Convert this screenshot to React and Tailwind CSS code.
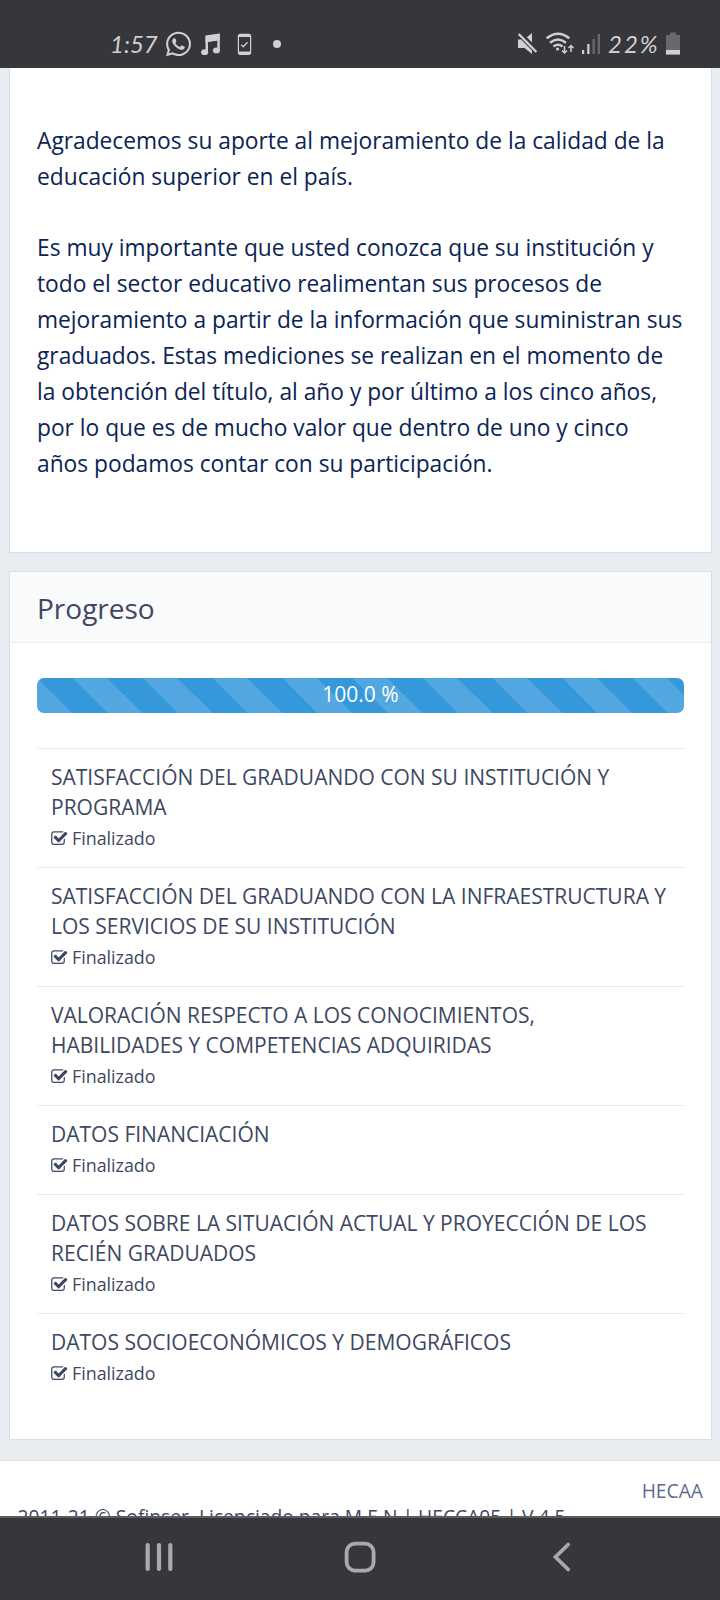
import React from "react";
import { FaWhatsapp } from "react-icons/fa";

const sections = [
  ["SATISFACCIÓN DEL GRADUANDO CON SU INSTITUCIÓN Y", "PROGRAMA"],
  ["SATISFACCIÓN DEL GRADUANDO CON LA INFRAESTRUCTURA Y", "LOS SERVICIOS DE SU INSTITUCIÓN"],
  ["VALORACIÓN RESPECTO A LOS CONOCIMIENTOS,", "HABILIDADES Y COMPETENCIAS ADQUIRIDAS"],
  ["DATOS FINANCIACIÓN"],
  ["DATOS SOBRE LA SITUACIÓN ACTUAL Y PROYECCIÓN DE LOS", "RECIÉN GRADUADOS"],
  ["DATOS SOCIOECONÓMICOS Y DEMOGRÁFICOS"],
];

const intro = [
  ["Agradecemos su aporte al mejoramiento de la calidad de la", "educación superior en el país."],
  [
    "Es muy importante que usted conozca que su institución y",
    "todo el sector educativo realimentan sus procesos de",
    "mejoramiento a partir de la información que suministran sus",
    "graduados. Estas mediciones se realizan en el momento de",
    "la obtención del título, al año y por último a los cinco años,",
    "por lo que es de mucho valor que dentro de uno y cinco",
    "años podamos contar con su participación.",
  ],
];

function Lines({ lines }) {
  return lines.map((line) => (
    <span key={line} className="block whitespace-nowrap">
      {line}
    </span>
  ));
}

function CheckSquare() {
  return (
    <svg className="mt-px h-[17.5px] w-[16.5px] shrink-0" viewBox="0 0 1664 1792" fill="currentColor">
      <path d="M1408 930v318q0 119-84.500 203.500t-203.500 84.500h-832q-119 0-203.500-84.500t-84.500-203.500v-832q0-119 84.500-203.500t203.500-84.500h832q63 0 117 25 15 7 18 23 3 17-9 29l-49 49q-10 10-23 10-3 0-9-2-23-6-45-6h-832q-66 0-113 47t-47 113v832q0 66 47 113t113 47h832q66 0 113-47t47-113v-254q0-13 9-22l64-64q10-10 23-10 6 0 12 3 20 8 20 29zm231-489l-814 814q-24 24-57 24t-57-24l-430-430q-24-24-24-57t24-57l110-110q24-24 57-24t57 24l263 263 647-647q24-24 57-24t57 24l110 110q24 24 24 57t-24 57z" />
    </svg>
  );
}

function StatusBar() {
  return (
    <header className="flex h-[68px] shrink-0 items-start bg-[#36373b] pl-[110px] pr-10 pt-8 text-[#d0d0d1]">
      <span className="w-[56px] whitespace-nowrap font-['Lato',sans-serif] text-[24px] italic leading-6">
        1:57
      </span>
      <FaWhatsapp className="-mt-[2px] h-[28px] w-[25px]" preserveAspectRatio="none" />
      <svg className="ml-[9px] h-6 w-[21px]" viewBox="200 32 21 24" fill="currentColor">
        <path d="M205.500 36 219.800 33.700V51h-2.500V40.500L208 42v10h-2.500z" />
        <path d="M205.500 35.600 219.800 33.600V40L205.500 42.200z" />
        <ellipse cx="204.600" cy="52.200" rx="3.500" ry="2.900" />
        <ellipse cx="216.400" cy="50.400" rx="3.500" ry="2.900" />
      </svg>
      <svg className="ml-[16px] h-6 w-[15px]" viewBox="237 32 15 24" fill="none" stroke="currentColor">
        <rect x="238.400" y="34.300" width="12.200" height="20" rx="2" strokeWidth="1.200" />
        <path d="M239 35.700h11M239 53h11" strokeWidth="2.800" />
        <path d="m241.300 44.700 2 2 4.200-4.400" strokeWidth="1.300" />
      </svg>
      <span className="ml-[21px] mt-2 size-2 rounded-full bg-current" />
      <svg className="ml-[236px] h-6 w-5" viewBox="517 32 20 24" fill="currentColor">
        <path d="M518 39.500h3.200L532 50.500V54l-7.500-6H518zM532 33v9.500l-5.200-5.200z" />
        <path d="m518.700 34 17.700 18" stroke="currentColor" strokeWidth="2.400" />
      </svg>
      <svg className="ml-[9px] h-6 w-[29px]" viewBox="546 32 29 24" fill="none" stroke="currentColor" strokeWidth="2.400">
        <path d="M546.700 38.300q11.300-9.200 22.600 0M550 42.700q8-6.500 16 0M553.500 46.500q4.500-3.300 9 0" />
        <circle cx="557.600" cy="49" r="1.600" fill="currentColor" stroke="none" />
        <path d="M564.500 46v7M562 50.500l2.500 2.500 2.500-2.500M571 52v-6M568.500 48l2.500-2.500 2.500 2.500" strokeWidth="1.500" />
      </svg>
      <svg className="ml-[6px] h-6 w-5" viewBox="581 32 20 24" fill="currentColor">
        <path d="M582 50h2.200v4H582zM587.200 44h2.300v10h-2.300z" />
        <path d="M592.500 39h2.300v15h-2.300zM597.700 34h2.300v20h-2.300z" fill="#68696d" />
      </svg>
      <span className="ml-[7px] w-[58px] whitespace-nowrap font-['Lato',sans-serif] text-[24px] italic leading-6 tracking-[2px]">
        22%
      </span>
      <svg className="h-6 w-[14px]" viewBox="666 32 14 24">
        <path d="M670 32.500h6V35h4v19.500h-14V35h4z" fill="#68696d" />
        <path d="M666 50h14v4.500h-14z" fill="currentColor" />
      </svg>
    </header>
  );
}

function NavBar() {
  return (
    <nav className="flex h-[84px] shrink-0 items-start border-t-2 border-[#5b5c60] bg-[#36373b] pl-[144px] pt-[21px] text-[#a9aaac]">
      <svg className="h-9 w-[30px]" viewBox="0 0 30 36" stroke="currentColor" strokeWidth="4.200" strokeLinecap="round">
        <path d="M3.700 6v24M15 6v24M26.300 6v24" />
      </svg>
      <svg className="ml-[168px] size-9" viewBox="0 0 36 36" fill="none" stroke="currentColor" strokeWidth="3.800">
        <rect x="4.600" y="4.600" width="27" height="27" rx="8.500" />
      </svg>
      <svg className="ml-[174px] h-9 w-6" viewBox="0 0 24 36" fill="none" stroke="currentColor" strokeWidth="3.800" strokeLinecap="round">
        <path d="M16.200 5.500 3.500 18l12.700 12.500" />
      </svg>
    </nav>
  );
}

export default function App() {
  return (
    <div className="flex h-[1600px] w-[720px] flex-col overflow-hidden bg-[#e9ecf1] font-['Open_Sans',sans-serif] text-[#3e4762]">
      <StatusBar />

      <main className="flex h-[1448px] shrink-0 flex-col overflow-hidden">
        <section className="ml-[9px] h-[485px] w-[703px] shrink-0 border border-t-0 border-[#d9dee4] bg-white pl-[27px] pt-[55px] text-[22.75px] leading-9 text-[#0b2454]">
          {intro.map((lines) => (
            <p key={lines[0]} className="mb-[35px]">
              <Lines lines={lines} />
            </p>
          ))}
        </section>

        <section className="ml-[9px] mt-[18px] h-[869px] w-[703px] shrink-0 border border-[#d9dee4] bg-white">
          <h2 className="ml-px h-[71px] border-b border-[#e7ebee] bg-[#f9fafc] pl-[26px] text-[28px] leading-[72px]">
            Progreso
          </h2>
          <div className="ml-[27px] mt-[35px] h-[35px] w-[647px] rounded-[7px] bg-[#3498db] bg-[linear-gradient(45deg,rgba(255,255,255,.15)_25%,transparent_25%,transparent_50%,rgba(255,255,255,.15)_50%,rgba(255,255,255,.15)_75%,transparent_75%)] bg-[length:70px_70px] bg-[position:0_35px] text-center text-[21px] leading-[33px] text-white">
            100.0 %
          </div>
          <ul className="ml-[27px] mt-[35px] w-[647px]">
            {sections.map((lines) => (
              <li key={lines[0]} className="border-t border-[#e7e9ec] py-[13px] pl-[14px]">
                <h3 className="text-[21px] leading-[30px]">
                  <Lines lines={lines} />
                </h3>
                <p className="flex items-center gap-[4.5px] text-[17.85px] leading-8">
                  <CheckSquare />
                  Finalizado
                </p>
              </li>
            ))}
          </ul>
        </section>

        <footer className="mt-5 h-[120px] shrink-0 border-t border-[#d9e0e4] bg-white px-[17.5px] pt-[17px] text-[19.25px] leading-[26px]">
          <p className="-mr-[0.5px] text-right text-[#5f6a91]">HECAA</p>
          <p className="whitespace-nowrap">2011-21 © Sofinser. Licenciado para M.E.N | HECCA05 | V 4.5</p>
        </footer>
      </main>

      <NavBar />
    </div>
  );
}
